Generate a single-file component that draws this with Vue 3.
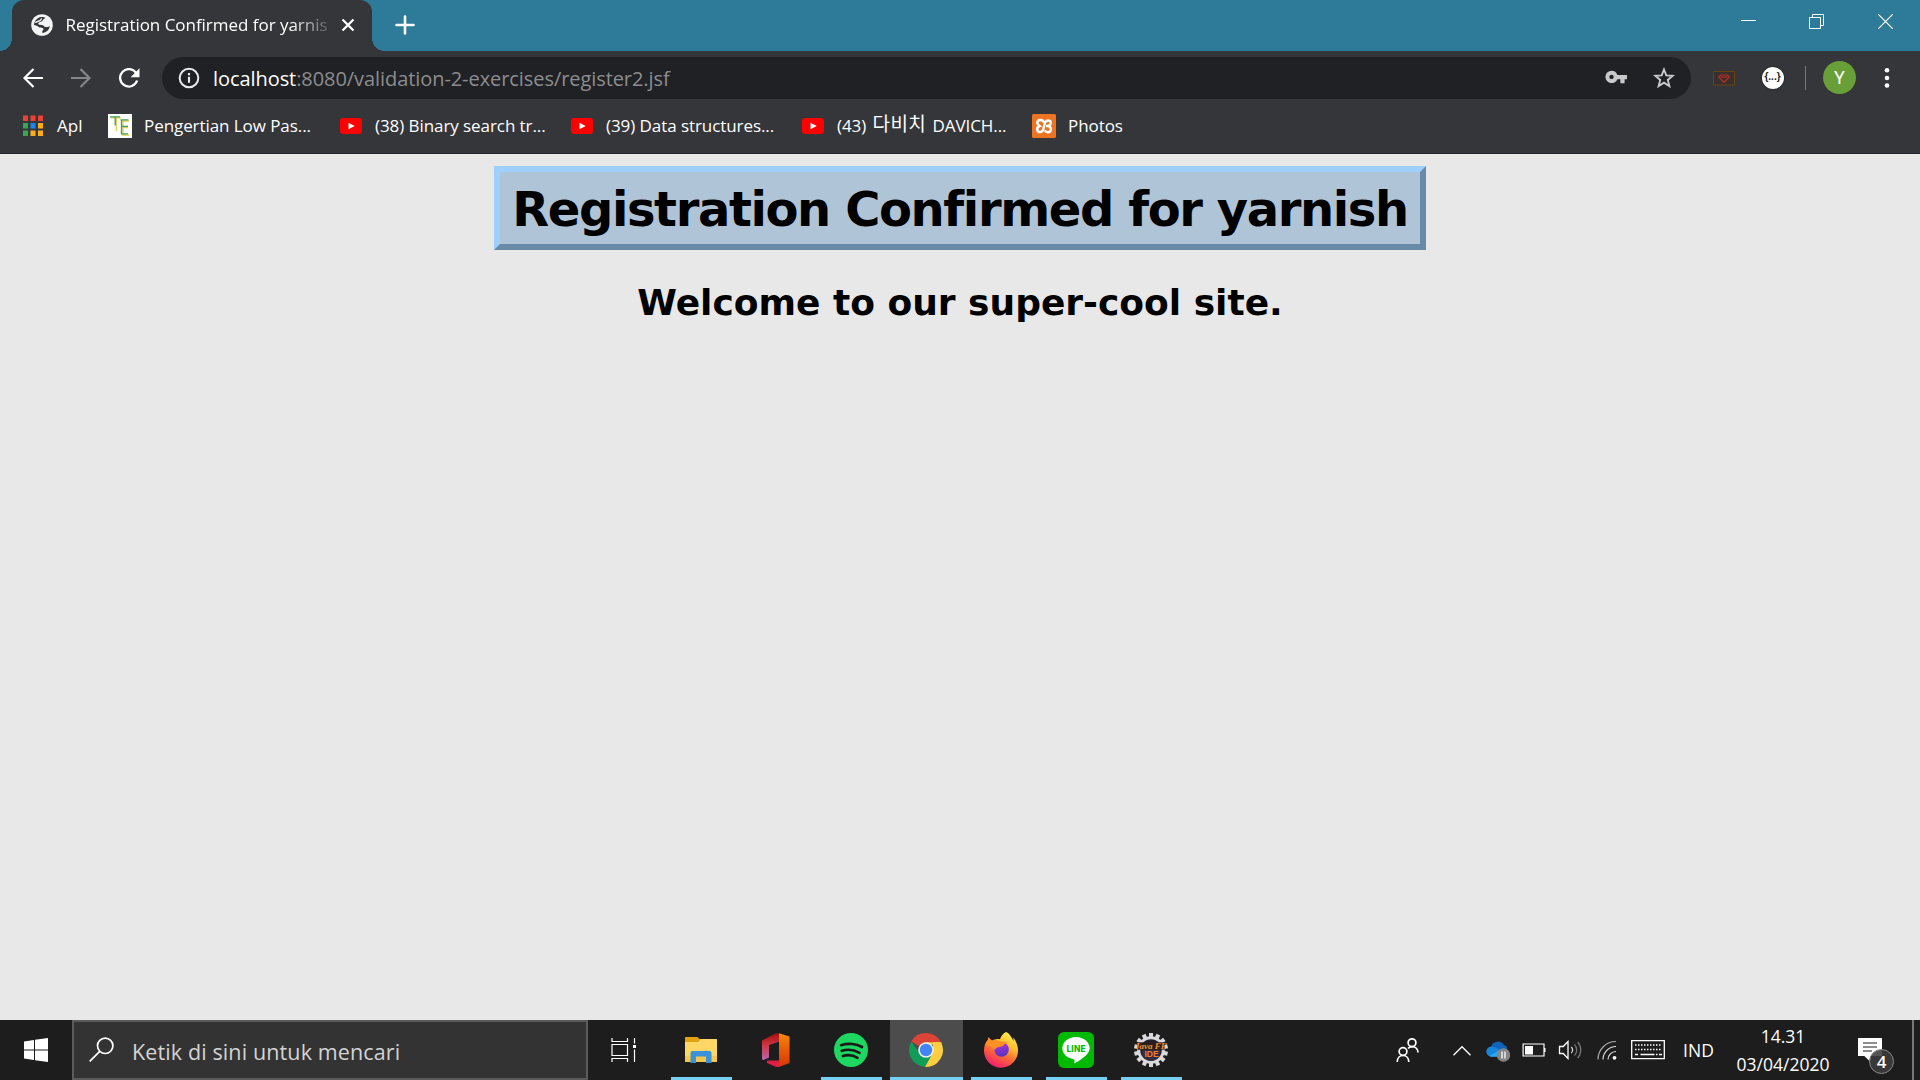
<script setup>
const bookmarks = [
  { icon: 'te', parts: [{ t: 'Pengertian Low Pas...' }] },
  { icon: 'yt', parts: [{ t: '(38) Binary search tr...' }] },
  { icon: 'yt', parts: [{ t: '(39) Data structures...' }] },
  { icon: 'yt', parts: [{ t: '(43) ' }, { t: '다비치', ko: true }, { t: ' DAVICH...' }] },
  { icon: 'xampp', parts: [{ t: 'Photos' }] },
]
const appColors = ['#ea4335', '#ea4335', '#ea4335', '#34a853', '#1a86f0', '#fbae17', '#34a853', '#fbae17', '#fbae17']
const apps = [
  { name: 'explorer', open: true },
  { name: 'office', open: false },
  { name: 'spotify', open: true },
  { name: 'chrome', open: true, active: true },
  { name: 'firefox', open: true },
  { name: 'line', open: true },
  { name: 'java', open: true },
]
const teeth = Array.from({ length: 14 }, (_, i) => (i * 360) / 14)
</script>

<template>
  <div class="screen">
    <header class="tabstrip">
      <div class="tab">
        <svg class="globe" width="22" height="22" viewBox="0 0 22 22">
          <circle cx="11" cy="11" r="10.8" fill="#f1f3f4" />
          <path d="M8.500 3.300c2-.7 5-.2 5.800.4-.6 1.300-2.800 1.500-2.700 2.800.1 1.300-2.300 1.100-3.300 1.700-.9.5-1.300 1.200-.9 2 .5.900 2.600.4 4 .8 1.600.5 1.700 1.900 3.200 2 1.400.1 3-.1 4.200-1.100-.4 3.600-3.200 6.500-7.600 6.900.1-1.100 0-1.900.9-2.700.8-.8.3-1.900-.7-2.200-1.400-.4-2.600 0-3.700-.9-1.100-1-2.800-1.800-4.700-2C3.100 8 5 4.800 8.500 3.300z" fill="#35363a" />
          <path d="M4.200 8.200c2 .2 2.800-1.200 4.300-1.500 1.300-.3 1.900-1 1.800-2.300" fill="none" stroke="#f1f3f4" stroke-width="1.500" />
        </svg>
        <span class="tab-title">Registration Confirmed for yarnis</span>
        <svg class="tab-close" width="14" height="14" viewBox="0 0 14 14"><path d="M1.500 1.500l11 11M12.500 1.500l-11 11" stroke="#fff" stroke-width="2.300" /></svg>
      </div>
      <svg class="plus" width="20" height="20" viewBox="0 0 20 20"><path d="M10 1.500v17M1.500 10h17" stroke="#fff" stroke-width="2.600" stroke-linecap="round" /></svg>
      <div class="controls">
        <span><svg width="15" height="15" viewBox="0 0 15 15"><path d="M0 6.500h15" stroke="#fff" /></svg></span>
        <span><svg width="15" height="15" viewBox="0 0 15 15"><path d="M.5 3.500h11v11H.5zM3.500 3.500v-3h11v11h-3" fill="none" stroke="#fff" /></svg></span>
        <span><svg width="15" height="15" viewBox="0 0 15 15"><path d="M0 0l15 15M15 0L0 15" stroke="#fff" stroke-width="1.200" /></svg></span>
      </div>
    </header>

    <div class="toolbar">
      <svg class="nav" width="20" height="20" viewBox="0 0 20 20"><path d="M20 10H2M10.500 1L1.500 10l9 9" fill="none" stroke="#fff" stroke-width="2.200" /></svg>
      <svg class="nav" width="20" height="20" viewBox="0 0 20 20"><path d="M0 10h18M9.500 1l9 9-9 9" fill="none" stroke="#85868a" stroke-width="2.200" /></svg>
      <svg class="nav reload" width="22" height="20" viewBox="0 0 22 20"><path d="M17.200 5.200A8.700 8.700 0 1 0 18.100 12.500" fill="none" stroke="#fff" stroke-width="2.300" /><path d="M20.500.3v8.900h-8.900z" fill="#fff" /></svg>
      <div class="omnibox">
        <svg class="info" width="22" height="22" viewBox="0 0 22 22"><circle cx="11" cy="11" r="9.300" fill="none" stroke="#e8eaed" stroke-width="2" /><path d="M11 9.700v6.100M11 6v2.200" stroke="#e8eaed" stroke-width="2.100" /></svg>
        <span class="url"><b>localhost</b>:8080/validation-2-exercises/register2.jsf</span>
        <svg class="key" width="22" height="14" viewBox="0 0 22 14"><path fill-rule="evenodd" d="M6.500.7a6.200 6.200 0 1 0 5.900 8.500h3v4h4.200v-4H22V5h-9.600A6.200 6.200 0 0 0 6.500.7zm0 4a2.200 2.200 0 1 1 0 4.400 2.200 2.200 0 0 1 0-4.400z" fill="#c8c9cb" /></svg>
        <svg class="star" width="22" height="22" viewBox="0 0 22 22"><path d="M11 2.500l2.300 5.900 6.400.4-4.900 4.100 1.600 6.200L11 15.700l-5.400 3.400 1.600-6.200-4.900-4.100 6.400-.4z" fill="none" stroke="#c8c9cb" stroke-width="1.900" /></svg>
      </div>
      <svg class="ext1" width="22" height="15" viewBox="0 0 22 15"><rect x=".5" y=".5" width="21" height="13.500" fill="#382f2f" stroke="#69410f" /><path d="M5.500 6l2-2h7l2 2-5.500 5.300zM7.500 6.200h7" fill="none" stroke="#b12f23" stroke-width="1.200" /></svg>
      <span class="ext2">{...}</span>
      <i class="sep"></i>
      <span class="avatar">Y</span>
      <svg class="dots" width="6" height="22" viewBox="0 0 6 22"><g fill="#fff"><circle cx="3" cy="3.300" r="2.300" /><circle cx="3" cy="11" r="2.300" /><circle cx="3" cy="18.500" r="2.300" /></g></svg>
    </div>

    <nav class="bookmarks">
      <div class="bm apps-bm">
        <svg width="24" height="24" viewBox="0 0 24 24"><rect v-for="(c, i) in appColors" :key="i" :x="2 + (i % 3) * 7.500" :y="1.500 + Math.floor(i / 3) * 7.500" width="5" height="5.500" :fill="c" /></svg>
        <span>Apl</span>
      </div>
      <div v-for="(b, n) in bookmarks" :key="n" class="bm">
        <svg v-if="b.icon === 'te'" width="24" height="24" viewBox="0 0 24 24"><rect width="24" height="24" fill="#fff" /><path d="M3 3.800h10M8.300 4v13M14 7h7M15 7v13M15 13.500h5M14 21h7" fill="none" stroke="#e0cf4e" stroke-width="1.300" /><path d="M2 2.800h10M7.200 3.500v8M12.500 5.800h8M13.500 6v14M14 12.300h6M13 19.800h7" fill="none" stroke="#3f9f5a" stroke-width="1.300" /></svg>
        <svg v-else-if="b.icon === 'yt'" width="24" height="24" viewBox="0 0 24 24"><rect x="1" y="4" width="22" height="16" rx="3" fill="#f00" /><path d="M9.500 8.700v6.600l6.200-3.300z" fill="#fff" /></svg>
        <svg v-else width="24" height="24" viewBox="0 0 24 24"><rect width="24" height="24" rx="1.500" fill="#ed7423" /><path d="M12 8.300C10.500 5 5.300 5.300 5.300 8.800c0 1.700 1 2.400 2.200 3.200-2.200 1-2.500 2.200-2.300 3.800.5 3.200 5 3 6-.3l1.600-6.300c1-3.800 6-3.500 6-.4 0 1.700-.9 2.400-2.200 3.200 2 1 2.400 2.200 2.200 3.800-.5 3-4.700 3.200-6 .5M14 12h2.500" fill="none" stroke="#fff" stroke-width="2.500" /></svg>
        <span class="label"><span v-for="(p, i) in b.parts" :key="i" :class="{ ko: p.ko }">{{ p.t }}</span></span>
      </div>
    </nav>

    <main class="page">
      <h1>Registration Confirmed for yarnish</h1>
      <h2>Welcome to our super-cool site.</h2>
    </main>

    <footer class="taskbar">
      <div class="start">
        <svg width="24" height="24" viewBox="0 0 24 24"><path d="M0 3.400L10 2v9.500H0zM11 1.800L24 0v11.500H11zM0 12.500h10V22L0 20.600zM11 12.500h13V24l-13-1.800z" fill="#fff" /></svg>
      </div>
      <div class="search">
        <svg width="25" height="25" viewBox="0 0 25 25"><circle cx="16.200" cy="8.800" r="7.700" fill="none" stroke="#fff" stroke-width="1.700" /><path d="M10.700 14.300L.7 24.300" stroke="#fff" stroke-width="1.700" /></svg>
        <span>Ketik di sini untuk mencari</span>
      </div>
      <div class="taskview">
        <svg width="26" height="24" viewBox="0 0 26 24"><path d="M1 0v3.500h15.500V0M1 24v-3.500h15.500V24M1 6.500h15.500v11H1zM23.500 0v5.500M23.500 11.500V24" fill="none" stroke="#fff" stroke-width="1.200" /><path d="M22 7h3v3h-3z" fill="#fff" /></svg>
      </div>
      <div v-for="a in apps" :key="a.name" class="app" :class="{ open: a.open, active: a.active }">
        <svg v-if="a.name === 'explorer'" width="36" height="36" viewBox="0 0 36 36">
          <path d="M2 6a1 1 0 0 1 1-1h11.500l2 2H33a1 1 0 0 1 1 1v5H2z" fill="#e0a210" /><path d="M2 10h13l3-3h15a1 1 0 0 1 1 1v21a1 1 0 0 1-1 1H2z" fill="#ffd766" /><path d="M2 24h32v5a1 1 0 0 1-1 1H2z" fill="#f7c64c" /><path d="M7.500 31V21a2 2 0 0 1 2-2h17a2 2 0 0 1 2 2v10h-5.500v-6.500H13V31z" fill="#3a92d8" />
        </svg>
        <svg v-else-if="a.name === 'office'" width="36" height="36" viewBox="0 0 36 36">
          <defs>
            <linearGradient id="of1" x2="0" y2="1"><stop stop-color="#a80c0c" /><stop offset=".5" stop-color="#cf3b4b" /><stop offset="1" stop-color="#b766b5" /></linearGradient>
            <linearGradient id="of2" x2="0" y2="1"><stop stop-color="#f58a0a" /><stop offset=".5" stop-color="#ea5a06" /><stop offset="1" stop-color="#d33605" /></linearGradient>
          </defs>
          <path d="M4 8.500L18.500 1l3 1v7.500L11 13v12.500L5.500 28 4 27.300z" fill="url(#of1)" /><path d="M21 1.300L31.500 4.500v26.500L21 35z" fill="url(#of2)" /><path d="M9 28.500h12V35h-3L9 31z" fill="#dc1f43" />
        </svg>
        <svg v-else-if="a.name === 'spotify'" width="36" height="36" viewBox="0 0 36 36">
          <circle cx="18" cy="18" r="17" fill="#1ed760" /><path d="M8 13.200c7-2.300 15.500-1.500 21 1.800M8.800 18.800c6-1.800 12.500-1 17.700 2M9.800 24c5-1.400 10.500-.8 14.700 1.800" fill="none" stroke="#191919" stroke-width="2.700" stroke-linecap="round" />
        </svg>
        <svg v-else-if="a.name === 'chrome'" width="36" height="36" viewBox="0 0 36 36">
          <path d="M18 18L3.300 9.500A17 17 0 0 1 33 10.200H18z" fill="#db4437" /><path d="M3.300 9.500A17 17 0 0 0 17 35l7.500-13L18 18 10.800 20z" fill="#109d58" /><path d="M33 10.200A17 17 0 0 1 17 35l7.500-13.500L25 10.200z" fill="#ffcd40" /><path d="M18 10.200h15l.8 1.800L18 13z" fill="#ffcd40" /><circle cx="18" cy="18" r="7.800" fill="#f1f1f1" /><circle cx="18" cy="18" r="6.200" fill="#4285f4" />
        </svg>
        <svg v-else-if="a.name === 'firefox'" width="36" height="36" viewBox="0 0 36 36">
          <defs>
            <linearGradient id="ff1" x1=".8" x2=".3" y2="1"><stop stop-color="#fff44f" /><stop offset=".35" stop-color="#ffbd2f" /><stop offset=".62" stop-color="#ff6b35" /><stop offset="1" stop-color="#f01771" /></linearGradient>
            <linearGradient id="ff2" x2=".2" y2="1"><stop stop-color="#b833e1" /><stop offset="1" stop-color="#5b35bd" /></linearGradient>
          </defs>
          <path d="M23 0c4.500 2 5.500 6 7.500 9 0-1.300-.2-2.500-.2-3.500C33 9 35 14 35 18.500A17 17 0 0 1 1 19c0-4.500 1-8.500 4-11.500V5.300l4 3.500c2-1.500 5-2.300 8-1.500 1-3 3-6 6-7.300z" fill="url(#ff1)" /><circle cx="18.500" cy="17.500" r="7.300" fill="url(#ff2)" /><path d="M5 5.300l4 3.500c2.500-1.300 6-1 8 1 2-1 6-.5 7.500 1.700-3 .2-3.500 1-4.500 2.500l-6 1.500-2.800 2.500C11 16 7 13.500 2.500 13 3 11 4 9.500 5 8z" fill="#ff8f27" />
        </svg>
        <svg v-else-if="a.name === 'line'" width="36" height="36" viewBox="0 0 36 36">
          <rect width="36" height="36" rx="6" fill="#00b900" /><path d="M18 5C10.300 5 4.300 10 4.300 16.300c0 5.400 4.700 9.900 11.200 10.900 1.500.4 1.200 1.300.7 4.300 4-2 15.500-8.500 15.500-15.200C31.700 10 25.700 5 18 5z" fill="#fff" /><text x="18" y="19.800" text-anchor="middle" font-family="Inter, sans-serif" font-weight="800" font-size="8.300" fill="#00b900" textLength="19">LINE</text>
        </svg>
        <svg v-else class="java" width="36" height="36" viewBox="0 0 36 36">
          <g fill="#d9d9dc"><rect v-for="t in teeth" :key="t" x="16" y="1" width="4" height="6" :transform="`rotate(${t} 18 18)`" /></g>
          <circle cx="18" cy="18" r="12.300" fill="#24202a" stroke="#d9d9dc" stroke-width="3" /><circle cx="18" cy="20" r="9" fill="#342c40" />
          <path d="M4.500 10.300h27v7.400h-27z" fill="#2a1d1c" />
          <text x="18" y="17" text-anchor="middle" font-family="Liberation Serif, serif" font-weight="bold" font-style="italic" font-size="9" fill="#f79030">Java FF</text>
          <text x="18.500" y="25.300" text-anchor="middle" font-family="Liberation Sans, sans-serif" font-weight="bold" font-size="8.500" fill="#e8822c">IDE</text>
        </svg>
      </div>

      <div class="tray">
        <span class="slot people"><svg width="24" height="24" viewBox="0 0 24 24"><g fill="none" stroke="#fff" stroke-width="1.700"><circle cx="16" cy="4.700" r="3.900" /><circle cx="7" cy="13.500" r="3.900" /><path d="M1.200 24c0-4 2.500-6.500 5.800-6.500s5.800 2.500 5.800 6.500M12 10.500c1-1.200 2.400-1.900 4-1.900 3.500 0 6 2.400 6 6" /></g></svg></span>
        <span class="slot w36"><svg width="18" height="11" viewBox="0 0 18 11"><path d="M.5 10.300L9 1.700l8.500 8.600" fill="none" stroke="#fff" stroke-width="1.300" /></svg></span>
        <span class="slot w36 cloud"><svg width="24" height="22" viewBox="0 0 24 22"><path d="M5 7.500a7 7 0 0 1 13-2.300c3 .5 3.500 3 3 6L10 14z" fill="#0f63b8" /><path d="M5 16.500a5 5 0 1 1 2.500-9.500c3 0 4.500 1.500 6 3l-4 6.500z" fill="#1685dc" /><path d="M3.500 16L14 9.800c4-1.500 7.500 0 8.500 3L18 16.800H5z" fill="#30a6ec" /><circle cx="17.500" cy="15" r="6.700" fill="#858585" /><path d="M16 11.500v7M19 11.500v7" stroke="#fff" stroke-width="1.300" /></svg></span>
        <span class="slot w36"><svg width="24" height="14" viewBox="0 0 24 14"><path d="M1.100 1h20.900v12H1.100z" fill="none" stroke="#fff" stroke-width="1.200" /><path d="M3 3h8v8.500H3zM22 5h1.500v4H22z" fill="#fff" /></svg></span>
        <span class="slot w36"><svg width="24" height="20" viewBox="0 0 24 20"><path d="M1.500 6.500h3.700l4.800-5v17l-4.800-5H1.500z" fill="none" stroke="#fff" stroke-width="1.300" /><path d="M13.300 7a4.500 4.500 0 0 1 0 6" fill="none" stroke="#ddd" stroke-width="1.200" /><path d="M16.500 4.500a8 8 0 0 1 0 11M19.700 2a12 12 0 0 1 0 16" fill="none" stroke="#777" stroke-width="1.200" /></svg></span>
        <span class="slot wifi"><svg width="20" height="20" viewBox="0 0 20 20"><g fill="none" stroke="#aaa" stroke-width="1.200"><path d="M1 19.500A18 18 0 0 1 19 1.500" /><path d="M6 19.500A13 13 0 0 1 19 6.500M11 19.500a8 8 0 0 1 8-8" stroke="#ddd" /></g><circle cx="17.500" cy="17.800" r="1.900" fill="#fff" /></svg></span>
        <span class="slot kb"><svg width="34" height="20" viewBox="0 0 34 20"><path d="M.7.700h32.600v18H.7z" fill="none" stroke="#fff" stroke-width="1.300" /><path d="M4 5h27M4 9.500h27" stroke="#fff" stroke-width="1.400" stroke-dasharray="1.500 1.500" /><path d="M4 14.500h3M9.500 14.500h14M25 14.500h1.500M28 14.500h3" stroke="#fff" stroke-width="1.400" /></svg></span>
        <span class="slot lang">IND</span>
        <span class="clock"><span>14.31</span><span>03/04/2020</span></span>
        <span class="notif">
          <svg width="24" height="24" viewBox="0 0 24 24"><path d="M0 0h24v18H12.500v6l-6.200-6H0z" fill="#fff" /><path d="M5 5h14M5 9h14M5 13h9" stroke="#1d1d1d" stroke-width="1.100" /></svg>
          <i>4</i>
        </span>
        <i class="peek"></i>
      </div>
    </footer>
  </div>
</template>

<style>
body { margin: 0; overflow: hidden; }
</style>

<style scoped>
.screen { width: 1920px; height: 1080px; display: flex; flex-direction: column; background: #e8e8e8; font-family: "Open Sans", "Noto Sans", "Noto Sans CJK KR", sans-serif; overflow: hidden; }
svg { display: block; flex: none; }
.tabstrip { height: 51px; flex: none; background: #2d7b99; display: flex; }
.tab { position: relative; width: 360px; height: 51px; margin-left: 12px; box-sizing: border-box; padding-left: 19px; background: #35363a; border-radius: 12px 12px 0 0; display: flex; align-items: center; }
.tab::before, .tab::after { content: ""; position: absolute; bottom: 0; width: 12px; height: 12px; }
.tab::before { left: -12px; background: radial-gradient(circle at 0 0, transparent 11.5px, #35363a 12px); }
.tab::after { right: -12px; background: radial-gradient(circle at 100% 0, transparent 11.5px, #35363a 12px); }
.globe, .tab-close { margin-top: -1px; }
.tab-title { margin: -2px 0 0 12.5px; width: 262.5px; flex: none; white-space: nowrap; color: #fff; font-size: 17px; line-height: 26px; letter-spacing: -0.03px; -webkit-mask-image: linear-gradient(to right, #000 225px, transparent 270px); mask-image: linear-gradient(to right, #000 225px, transparent 270px); }
.tab-close { margin-left: 13px; }
.plus { margin: 15px 0 0 23px; }
.controls { margin-left: auto; display: flex; height: 43px; }
.controls span { width: 69px; display: flex; align-items: center; justify-content: center; }
.controls span:first-child { width: 67px; }
.toolbar { height: 52px; flex: none; background: #35363a; display: flex; align-items: center; padding-left: 23px; }
.nav { margin-right: 28px; margin-top: 1px; }
.nav.reload { margin-right: 21px; }
.omnibox { width: 1529px; height: 42px; margin-top: 2px; border-radius: 21px; background: #202124; display: flex; align-items: center; flex: none; }
.info { margin-left: 16px; }
.url { margin-left: 13px; color: #8c8d90; font-size: 20px; letter-spacing: -0.07px; line-height: 30px; white-space: nowrap; margin-top: 1px; }
.url b { font-weight: 400; color: #fff; }
.key { margin-left: auto; margin-right: 26px; margin-top: -2px; }
.star { margin-right: 16px; }
.ext1 { margin-left: 22px; margin-top: 2px; }
.ext2 { width: 22px; height: 22px; border-radius: 50%; margin-left: 26.5px; margin-top: 2px; background: #fff; color: #222; font: 700 10px/20px "Liberation Sans", sans-serif; text-align: center; box-shadow: 0 0 2px #111; }
.sep { width: 1px; height: 24px; margin-left: 21.5px; margin-top: 2px; background: #77787b; }
.avatar { width: 33px; height: 33px; margin-left: 17px; margin-top: 1px; border-radius: 50%; background: #689f38; color: #fff; font: 18px/33px Roboto, sans-serif; text-align: center; }
.dots { margin-left: 28px; margin-top: 1px; }
.bookmarks { height: 51px; box-sizing: border-box; flex: none; background: #35363a; border-bottom: 1px solid #242528; display: flex; padding-left: 21px; }
.bm { width: 231px; height: 46px; display: flex; align-items: center; gap: 12px; color: #fff; font-size: 17px; white-space: nowrap; }
.bm > span { margin-top: -1px; line-height: 26px; }
.label { white-space: pre; letter-spacing: -0.07px; }
.ko { position: relative; top: -1px; margin: 0 2px; font-family: "Noto Sans CJK KR", sans-serif; font-size: 19px; line-height: 20px; font-weight: 400; letter-spacing: 0.4px; }
.apps-bm { width: 87px; }
.page { flex: 1; display: flex; flex-direction: column; align-items: center; color: #000; font-family: Verdana, "DejaVu Sans", sans-serif; }
h1 { width: 932px; height: 84px; box-sizing: border-box; margin: 12px 0 0; border: 6px solid; border-color: #9ed0fd #6a8ba8 #6a8ba8 #9ed0fd; background: #b0c4d8; font-size: 48px; line-height: 74px; letter-spacing: -1.4px; text-align: center; white-space: nowrap; }
h2 { margin: 31px 0 0; font-size: 36px; line-height: 44px; white-space: nowrap; }
.taskbar { height: 60px; flex: none; background: #1d1d1d; display: flex; color: #fff; }
.start { width: 72px; display: flex; align-items: center; justify-content: center; }
.search { width: 516px; box-sizing: border-box; border: 2px solid #5b5b5b; background: #333; display: flex; align-items: center; padding-left: 16px; }
.search svg { margin: -1px 0 0 -1px; }
.search span { margin-left: 18px; margin-top: 3px; color: #d4d4d4; font-size: 21.5px; letter-spacing: 0.12px; white-space: nowrap; }
.taskview { width: 76px; box-sizing: border-box; padding-left: 23px; display: flex; align-items: center; }
.app { width: 73px; margin-right: 2px; position: relative; display: flex; align-items: center; justify-content: center; }
.app.active::before { content: ""; position: absolute; inset: 0 -1px 0 1px; background: #4c4c4c; }
.app svg { position: relative; }
.app.open::after { content: ""; position: absolute; left: 7px; right: 5px; bottom: 0; height: 3px; background: #76d0f5; }
.app.active::after { left: 1px; right: -1px; }
.java { overflow: visible; }
.tray { margin-left: auto; width: 536px; display: flex; }
.slot { display: flex; align-items: center; justify-content: center; flex: none; }
.people { width: 48px; margin-right: 12px; }
.w36 { width: 36px; }
.cloud { padding-right: 1px; padding-top: 2px; box-sizing: border-box; }
.wifi { width: 37px; }
.kb { width: 45px; }
.lang { width: 57px; font-size: 17.5px; }
.clock { width: 112px; display: flex; flex-direction: column; align-items: center; font-size: 17.5px; line-height: 28px; padding-top: 2px; box-sizing: border-box; }
.notif { width: 73px; box-sizing: border-box; padding: 18px 0 0 19px; position: relative; }
.notif i { position: absolute; left: 30px; top: 29px; width: 23px; height: 23px; border: 1px solid #888; border-radius: 50%; background: rgba(60, 60, 60, .88); font-style: normal; font-weight: 600; font-size: 17px; line-height: 23px; text-align: center; }
.peek { width: 2px; background: #777; }
</style>
